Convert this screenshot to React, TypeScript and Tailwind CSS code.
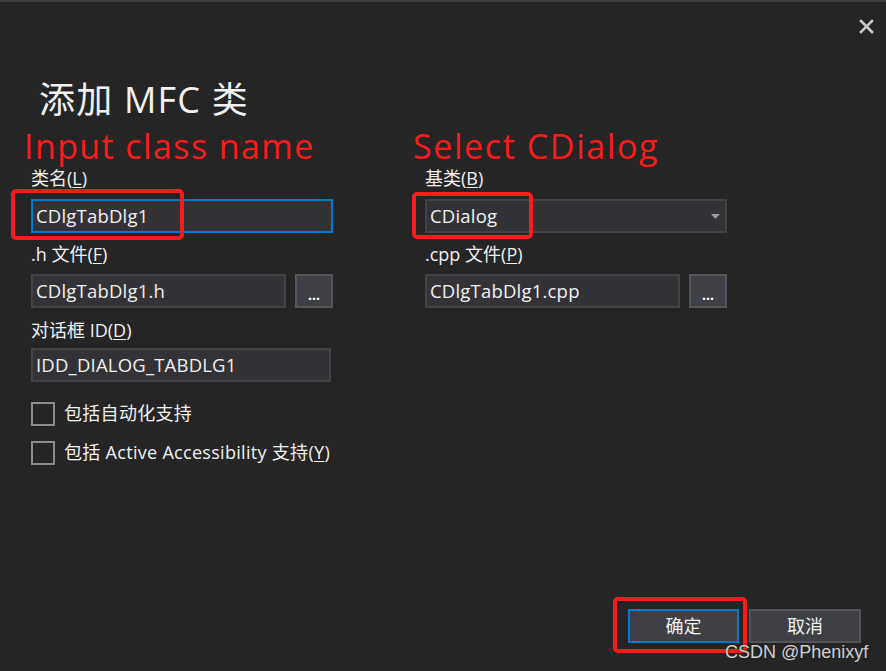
import type { ReactNode } from 'react';

const font = { fontFamily: '"Open Sans", "Noto Sans CJK SC", sans-serif' };

function Label({ children, className = '' }: { children: ReactNode; className?: string }) {
  return (
    <div className={`h-[22px] leading-[22px] text-[18px] text-[#f1f1f1] whitespace-nowrap ${className}`}>
      {children}
    </div>
  );
}

function Field({ value, width, focused = false, className = '' }: { value: string; width: string; focused?: boolean; className?: string }) {
  return (
    <div
      className={`${width} h-[34px] border-2 ${focused ? 'border-[#007acc]' : 'border-[#434346]'} bg-[#333337] flex items-center pl-[3px] text-[18.5px] tracking-[0.2px] text-[#f1f1f1] whitespace-nowrap ${className}`}
    >
      {value}
    </div>
  );
}

function BrowseButton() {
  return (
    <div className="w-[38px] h-[34px] border-2 border-[#555558] bg-[#3f3f46] flex items-end justify-center pb-[4px] text-[14px] font-bold leading-none text-white">
      ...
    </div>
  );
}

function Checkbox({ children, className = '' }: { children: ReactNode; className?: string }) {
  return (
    <div className={`flex items-center gap-[9px] ${className}`}>
      <div className="w-[24px] h-[24px] border-2 border-[#8c8c8c]" />
      <span className="text-[18px] tracking-[0.3px] text-[#f1f1f1] whitespace-nowrap">{children}</span>
    </div>
  );
}

// red annotation frames drawn over the dialog
function Mark({ className }: { className: string }) {
  return <div className={`absolute border-4 border-[#fa1b1b] rounded-[5px] pointer-events-none ${className}`} />;
}

export default function App() {
  return (
    <div className="relative w-[886px] h-[671px] bg-[#252526] overflow-hidden flex flex-col" style={font}>
      <div className="h-[2px] bg-[#3e3e42]" />

      {/* close */}
      <div className="flex justify-end pr-[12px] pt-[17px] h-[78px]">
        <svg width="15" height="15" viewBox="0 0 15 15">
          <path d="M2 2 L13 13 M13 2 L2 13" stroke="#c8c8c8" strokeWidth="2.6" strokeLinecap="square" />
        </svg>
      </div>

      <h1 className="pl-[39px] h-[40px] leading-[40px] text-[36px] tracking-[1.2px] text-[#f1f1f1] whitespace-nowrap">添加 MFC 类</h1>

      <div className="flex pl-[31px] mt-[10px]">
        {/* left column */}
        <div className="w-[394px] flex flex-col">
          <div className="-ml-[7px] h-[33px] leading-[33px] text-[34px] tracking-[1.4px] text-[#fa1b1b] whitespace-nowrap">Input class name</div>
          <Label className="mt-[4px]">
            类名(<span className="underline underline-offset-2">L</span>)
          </Label>
          <Field value="CDlgTabDlg1" width="w-[302px]" focused className="mt-[10px]" />
          <Label className="mt-[10px]">
            .h 文件(<span className="underline underline-offset-2">F</span>)
          </Label>
          <div className="flex gap-[9px] mt-[9px]">
            <Field value="CDlgTabDlg1.h" width="w-[255px]" />
            <BrowseButton />
          </div>
          <Label className="mt-[11px]">
            对话框 ID(<span className="underline underline-offset-2">D</span>)
          </Label>
          <Field value="IDD_DIALOG_TABDLG1" width="w-[300px]" className="mt-[7px]" />
          <Checkbox className="mt-[18px]">包括自动化支持</Checkbox>
          <Checkbox className="mt-[12px]">
            包括 Active Accessibility 支持(<span className="underline underline-offset-2">Y</span>)
          </Checkbox>
        </div>

        {/* right column */}
        <div className="w-[302px] flex flex-col">
          <div className="-ml-[12px] h-[33px] leading-[33px] text-[34px] tracking-[1.6px] text-[#fa1b1b] whitespace-nowrap">Select CDialog</div>
          <Label className="mt-[4px]">
            基类(<span className="underline underline-offset-2">B</span>)
          </Label>
          <div className="mt-[10px] w-[302px] h-[34px] border-2 border-[#434346] bg-[#333337] flex items-center justify-between pl-[3px] pr-[5px] text-[18.5px] tracking-[0.2px] text-[#f1f1f1]">
            <span>CDialog</span>
            <svg width="9" height="5" viewBox="0 0 9 5">
              <path d="M0 0 H9 L4.5 5 Z" fill="#9a9a9a" />
            </svg>
          </div>
          <Label className="mt-[10px]">
            .cpp 文件(<span className="underline underline-offset-2">P</span>)
          </Label>
          <div className="flex gap-[9px] mt-[9px]">
            <Field value="CDlgTabDlg1.cpp" width="w-[255px]" />
            <BrowseButton />
          </div>
        </div>
      </div>

      {/* footer buttons */}
      <div className="mt-auto flex justify-end gap-[10px] pr-[25px] pb-[28px]">
        <button className="w-[111px] h-[34px] border-2 border-[#007acc] bg-[#3f3f46] text-[18px] text-[#f1f1f1]">确定</button>
        <button className="w-[112px] h-[34px] border-2 border-[#555558] bg-[#3f3f46] text-[18px] text-[#f1f1f1]">取消</button>
      </div>

      <Mark className="left-[11px] top-[189px] w-[173px] h-[51px]" />
      <Mark className="left-[412px] top-[192px] w-[121px] h-[47px]" />
      <Mark className="left-[613px] top-[597px] w-[134px] h-[56px]" />

      <div
        className="absolute left-[725px] top-[639px] text-[18px] text-[#cfcfcf] whitespace-nowrap"
        style={{ fontFamily: '"Liberation Sans", Arial, sans-serif', textShadow: '0 0 2px #202020' }}
      >
        CSDN @Phenixyf
      </div>
    </div>
  );
}
